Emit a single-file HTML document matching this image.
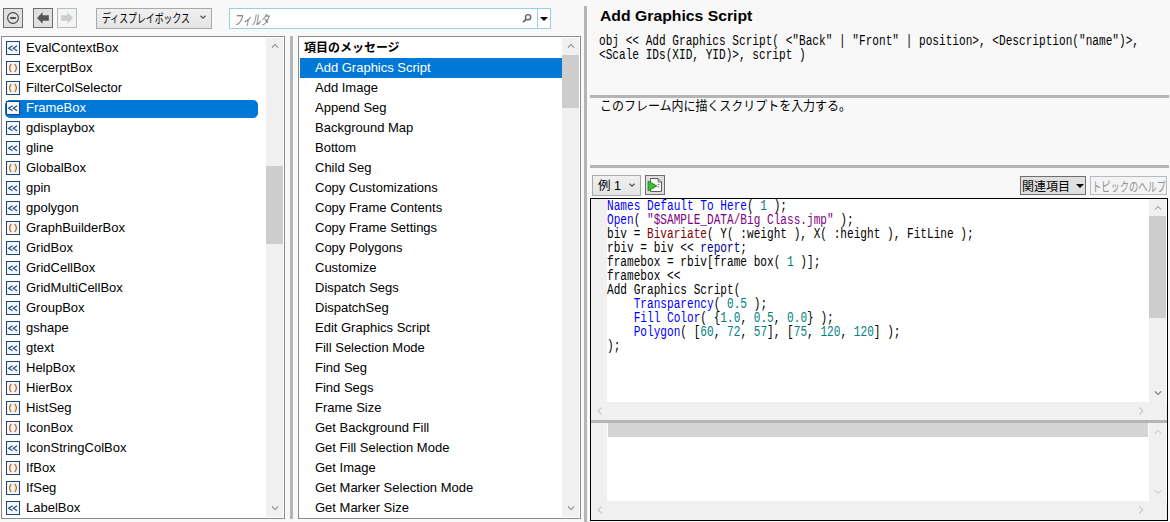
<!DOCTYPE html><html lang="ja"><head><meta charset="utf-8"><title>Scripting Index</title><style>
*{box-sizing:border-box;margin:0;padding:0}
html,body{width:1170px;height:522px;overflow:hidden}
body{background:#f8f8f8;font:13px 'Liberation Sans', 'Noto Sans CJK JP', sans-serif;color:#000;position:relative}
.abs{position:absolute}
.sx{display:inline-block;transform-origin:0 50%;white-space:pre}
.btn{position:absolute;background:#e1e1e1;border:1px solid #adadad}
.list{position:absolute;background:#fff;border:1px solid #8c8c8c;overflow:hidden}
.row{position:absolute;left:0;height:20px;line-height:20px;white-space:pre;font-size:13px}
.ico{position:absolute;left:4px;top:3px;width:14px;height:14px;border:1px solid #1c457f;background:#f3f7fc}
.sbv{position:absolute;background:#f0f0f0;width:17px}
.sbh{position:absolute;background:#f0f0f0;height:17px}
.thumb{position:absolute;background:#cdcdcd}
.split{position:absolute;background:#b5b5b5}
.code{font:11.11px 'Liberation Mono', 'IPAGothic', monospace;line-height:11.024px;white-space:pre;position:absolute;color:#000;transform:scaleY(1.27);transform-origin:0 0}
.k{color:#0000ff} .k2{color:#000090} .n{color:#008080} .s{color:#800080} .p{color:#800000}
</style></head><body>
<div class="btn" style="left:3px;top:8px;width:20px;height:20px;border-color:#6e6e6e;background:#e0e0e0"><svg width="18" height="18" viewBox="0 0 18 18" style="display:block"><circle cx="9" cy="9" r="5.4" fill="none" stroke="#444" stroke-width="1.1"/><rect x="6.2" y="8.2" width="5.6" height="1.7" fill="#333"/></svg></div>
<div class="btn" style="left:33px;top:8px;width:20px;height:20px;border-color:#6e6e6e;background:#e0e0e0"><svg width="18" height="18" viewBox="0 0 18 18" style="display:block"><path d="M3 9 L8.6 3.2 L8.6 6.3 L14.8 6.3 L14.8 11.7 L8.6 11.7 L8.6 14.8 Z" fill="#555"/></svg></div>
<div class="btn" style="left:57px;top:8px;width:20px;height:20px;border-color:#b3bcc2;background:#f4f4f4"><svg width="18" height="18" viewBox="0 0 18 18" style="display:block"><path d="M15 9 L9.4 3.2 L9.4 6.3 L3.2 6.3 L3.2 11.7 L9.4 11.7 L9.4 14.8 Z" fill="#cdcdcd"/></svg></div>
<div class="btn" style="left:96px;top:8px;width:116px;height:21px;background:linear-gradient(#f0f0f0,#e4e4e4);border-color:#a9a9a9"><div class="abs" style="left:5px;top:0;line-height:19px;height:19px"><span class="sx" style="font:12px 'Liberation Sans', 'Noto Sans CJK JP', sans-serif;transform:scaleX(0.7407);">ディスプレイボックス</span></div></div>
<svg class="abs" style="left:197px;top:11.3px" width="12" height="12" viewBox="-6 -6 12 12"><polyline points="-2.48,-1.24 0,1.24 2.48,-1.24" fill="none" stroke="#505050" stroke-width="1.2"/></svg>
<div class="abs" style="left:229px;top:8px;width:322px;height:21px;background:#fff;border:1px solid #9ccdf0"><div class="abs" style="left:4px;top:0;line-height:19px;height:19px;color:#6d6d6d"><span class="sx" style="font:italic 14px 'Liberation Sans', 'Noto Sans CJK JP', sans-serif;transform:scaleX(0.6369);">フィルタ</span></div><div class="abs" style="left:307px;top:0;width:1px;height:19px;background:#9ccdf0"></div></div>
<svg class="abs" style="left:521px;top:12px" width="12" height="12" viewBox="0 0 12 12"><circle cx="7.1" cy="5.2" r="2.6" fill="none" stroke="#636363" stroke-width="1.4"/><path d="M5.3 7.2 L2 10.2" stroke="#636363" stroke-width="1.8" fill="none"/></svg>
<svg class="abs" style="left:539px;top:15px" width="10" height="8" viewBox="0 0 10 8"><path d="M1 2 L9 2 L5 6 Z" fill="#000"/></svg>
<div class="list" style="left:1px;top:36px;width:284px;height:483px">
<div class="row" style="top:1px"><span class="ico"><svg width="12" height="12" viewBox="0 0 12 12" style="display:block"><path d="M5.5 3.7 L1.6 6.2 L5.5 8.7 M10.1 3.7 L6.2 6.2 L10.1 8.7" fill="none" stroke="#1c457f" stroke-width="1.05"/></svg></span><span style="margin-left:24px">EvalContextBox</span></div>
<div class="row" style="top:21px"><span class="ico"><svg width="12" height="12" viewBox="0 0 12 12" style="display:block"><path d="M4.3 2 Q0.9 6 4.3 10 M7.7 2 Q11.1 6 7.7 10" fill="none" stroke="#d36c12" stroke-width="1.3"/></svg></span><span style="margin-left:24px">ExcerptBox</span></div>
<div class="row" style="top:41px"><span class="ico"><svg width="12" height="12" viewBox="0 0 12 12" style="display:block"><path d="M4.3 2 Q0.9 6 4.3 10 M7.7 2 Q11.1 6 7.7 10" fill="none" stroke="#d36c12" stroke-width="1.3"/></svg></span><span style="margin-left:24px">FilterColSelector</span></div>
<div class="abs" style="left:3px;top:63px;width:253px;height:18px;background:#0078d7;border-radius:5px"></div>
<div class="row" style="top:61px;color:#fff"><span class="ico"><svg width="12" height="12" viewBox="0 0 12 12" style="display:block"><path d="M5.5 3.7 L1.6 6.2 L5.5 8.7 M10.1 3.7 L6.2 6.2 L10.1 8.7" fill="none" stroke="#1c457f" stroke-width="1.05"/></svg></span><span style="margin-left:24px">FrameBox</span></div>
<div class="row" style="top:81px"><span class="ico"><svg width="12" height="12" viewBox="0 0 12 12" style="display:block"><path d="M5.5 3.7 L1.6 6.2 L5.5 8.7 M10.1 3.7 L6.2 6.2 L10.1 8.7" fill="none" stroke="#1c457f" stroke-width="1.05"/></svg></span><span style="margin-left:24px">gdisplaybox</span></div>
<div class="row" style="top:101px"><span class="ico"><svg width="12" height="12" viewBox="0 0 12 12" style="display:block"><path d="M5.5 3.7 L1.6 6.2 L5.5 8.7 M10.1 3.7 L6.2 6.2 L10.1 8.7" fill="none" stroke="#1c457f" stroke-width="1.05"/></svg></span><span style="margin-left:24px">gline</span></div>
<div class="row" style="top:121px"><span class="ico"><svg width="12" height="12" viewBox="0 0 12 12" style="display:block"><path d="M4.3 2 Q0.9 6 4.3 10 M7.7 2 Q11.1 6 7.7 10" fill="none" stroke="#d36c12" stroke-width="1.3"/></svg></span><span style="margin-left:24px">GlobalBox</span></div>
<div class="row" style="top:141px"><span class="ico"><svg width="12" height="12" viewBox="0 0 12 12" style="display:block"><path d="M5.5 3.7 L1.6 6.2 L5.5 8.7 M10.1 3.7 L6.2 6.2 L10.1 8.7" fill="none" stroke="#1c457f" stroke-width="1.05"/></svg></span><span style="margin-left:24px">gpin</span></div>
<div class="row" style="top:161px"><span class="ico"><svg width="12" height="12" viewBox="0 0 12 12" style="display:block"><path d="M5.5 3.7 L1.6 6.2 L5.5 8.7 M10.1 3.7 L6.2 6.2 L10.1 8.7" fill="none" stroke="#1c457f" stroke-width="1.05"/></svg></span><span style="margin-left:24px">gpolygon</span></div>
<div class="row" style="top:181px"><span class="ico"><svg width="12" height="12" viewBox="0 0 12 12" style="display:block"><path d="M4.3 2 Q0.9 6 4.3 10 M7.7 2 Q11.1 6 7.7 10" fill="none" stroke="#d36c12" stroke-width="1.3"/></svg></span><span style="margin-left:24px">GraphBuilderBox</span></div>
<div class="row" style="top:201px"><span class="ico"><svg width="12" height="12" viewBox="0 0 12 12" style="display:block"><path d="M5.5 3.7 L1.6 6.2 L5.5 8.7 M10.1 3.7 L6.2 6.2 L10.1 8.7" fill="none" stroke="#1c457f" stroke-width="1.05"/></svg></span><span style="margin-left:24px">GridBox</span></div>
<div class="row" style="top:221px"><span class="ico"><svg width="12" height="12" viewBox="0 0 12 12" style="display:block"><path d="M5.5 3.7 L1.6 6.2 L5.5 8.7 M10.1 3.7 L6.2 6.2 L10.1 8.7" fill="none" stroke="#1c457f" stroke-width="1.05"/></svg></span><span style="margin-left:24px">GridCellBox</span></div>
<div class="row" style="top:241px"><span class="ico"><svg width="12" height="12" viewBox="0 0 12 12" style="display:block"><path d="M5.5 3.7 L1.6 6.2 L5.5 8.7 M10.1 3.7 L6.2 6.2 L10.1 8.7" fill="none" stroke="#1c457f" stroke-width="1.05"/></svg></span><span style="margin-left:24px">GridMultiCellBox</span></div>
<div class="row" style="top:261px"><span class="ico"><svg width="12" height="12" viewBox="0 0 12 12" style="display:block"><path d="M5.5 3.7 L1.6 6.2 L5.5 8.7 M10.1 3.7 L6.2 6.2 L10.1 8.7" fill="none" stroke="#1c457f" stroke-width="1.05"/></svg></span><span style="margin-left:24px">GroupBox</span></div>
<div class="row" style="top:281px"><span class="ico"><svg width="12" height="12" viewBox="0 0 12 12" style="display:block"><path d="M5.5 3.7 L1.6 6.2 L5.5 8.7 M10.1 3.7 L6.2 6.2 L10.1 8.7" fill="none" stroke="#1c457f" stroke-width="1.05"/></svg></span><span style="margin-left:24px">gshape</span></div>
<div class="row" style="top:301px"><span class="ico"><svg width="12" height="12" viewBox="0 0 12 12" style="display:block"><path d="M5.5 3.7 L1.6 6.2 L5.5 8.7 M10.1 3.7 L6.2 6.2 L10.1 8.7" fill="none" stroke="#1c457f" stroke-width="1.05"/></svg></span><span style="margin-left:24px">gtext</span></div>
<div class="row" style="top:321px"><span class="ico"><svg width="12" height="12" viewBox="0 0 12 12" style="display:block"><path d="M5.5 3.7 L1.6 6.2 L5.5 8.7 M10.1 3.7 L6.2 6.2 L10.1 8.7" fill="none" stroke="#1c457f" stroke-width="1.05"/></svg></span><span style="margin-left:24px">HelpBox</span></div>
<div class="row" style="top:341px"><span class="ico"><svg width="12" height="12" viewBox="0 0 12 12" style="display:block"><path d="M4.3 2 Q0.9 6 4.3 10 M7.7 2 Q11.1 6 7.7 10" fill="none" stroke="#d36c12" stroke-width="1.3"/></svg></span><span style="margin-left:24px">HierBox</span></div>
<div class="row" style="top:361px"><span class="ico"><svg width="12" height="12" viewBox="0 0 12 12" style="display:block"><path d="M4.3 2 Q0.9 6 4.3 10 M7.7 2 Q11.1 6 7.7 10" fill="none" stroke="#d36c12" stroke-width="1.3"/></svg></span><span style="margin-left:24px">HistSeg</span></div>
<div class="row" style="top:381px"><span class="ico"><svg width="12" height="12" viewBox="0 0 12 12" style="display:block"><path d="M4.3 2 Q0.9 6 4.3 10 M7.7 2 Q11.1 6 7.7 10" fill="none" stroke="#d36c12" stroke-width="1.3"/></svg></span><span style="margin-left:24px">IconBox</span></div>
<div class="row" style="top:401px"><span class="ico"><svg width="12" height="12" viewBox="0 0 12 12" style="display:block"><path d="M5.5 3.7 L1.6 6.2 L5.5 8.7 M10.1 3.7 L6.2 6.2 L10.1 8.7" fill="none" stroke="#1c457f" stroke-width="1.05"/></svg></span><span style="margin-left:24px">IconStringColBox</span></div>
<div class="row" style="top:421px"><span class="ico"><svg width="12" height="12" viewBox="0 0 12 12" style="display:block"><path d="M4.3 2 Q0.9 6 4.3 10 M7.7 2 Q11.1 6 7.7 10" fill="none" stroke="#d36c12" stroke-width="1.3"/></svg></span><span style="margin-left:24px">IfBox</span></div>
<div class="row" style="top:441px"><span class="ico"><svg width="12" height="12" viewBox="0 0 12 12" style="display:block"><path d="M4.3 2 Q0.9 6 4.3 10 M7.7 2 Q11.1 6 7.7 10" fill="none" stroke="#d36c12" stroke-width="1.3"/></svg></span><span style="margin-left:24px">IfSeg</span></div>
<div class="row" style="top:461px"><span class="ico"><svg width="12" height="12" viewBox="0 0 12 12" style="display:block"><path d="M5.5 3.7 L1.6 6.2 L5.5 8.7 M10.1 3.7 L6.2 6.2 L10.1 8.7" fill="none" stroke="#1c457f" stroke-width="1.05"/></svg></span><span style="margin-left:24px">LabelBox</span></div>
<div class="sbv" style="left:264px;top:1px;height:479px"><div class="thumb" style="left:0;top:128px;width:17px;height:78px"></div></div>
</div>
<svg class="abs" style="left:269.4px;top:40.3px" width="12" height="12" viewBox="-6 -6 12 12"><polyline points="-3.1,1.55 0,-1.55 3.1,1.55" fill="none" stroke="#8c8c8c" stroke-width="1.15"/></svg>
<svg class="abs" style="left:269.4px;top:502.3px" width="12" height="12" viewBox="-6 -6 12 12"><polyline points="-3.1,-1.55 0,1.55 3.1,-1.55" fill="none" stroke="#8c8c8c" stroke-width="1.15"/></svg>
<div class="split" style="left:290px;top:36px;width:3px;height:483px"></div>
<div class="list" style="left:298px;top:36px;width:283px;height:483px">
<div class="row" style="top:1px;left:5px"><span class="sx" style="font:bold 12px 'Liberation Sans', 'Noto Sans CJK JP', sans-serif;transform:scaleX(0.9983);">項目のメッセージ</span></div>
<div class="abs" style="left:1px;top:21px;width:262px;height:20px;background:#0078d7"></div>
<div class="row" style="top:21px;left:16px;color:#fff">Add Graphics Script</div>
<div class="row" style="top:41px;left:16px">Add Image</div>
<div class="row" style="top:61px;left:16px">Append Seg</div>
<div class="row" style="top:81px;left:16px">Background Map</div>
<div class="row" style="top:101px;left:16px">Bottom</div>
<div class="row" style="top:121px;left:16px">Child Seg</div>
<div class="row" style="top:141px;left:16px">Copy Customizations</div>
<div class="row" style="top:161px;left:16px">Copy Frame Contents</div>
<div class="row" style="top:181px;left:16px">Copy Frame Settings</div>
<div class="row" style="top:201px;left:16px">Copy Polygons</div>
<div class="row" style="top:221px;left:16px">Customize</div>
<div class="row" style="top:241px;left:16px">Dispatch Segs</div>
<div class="row" style="top:261px;left:16px">DispatchSeg</div>
<div class="row" style="top:281px;left:16px">Edit Graphics Script</div>
<div class="row" style="top:301px;left:16px">Fill Selection Mode</div>
<div class="row" style="top:321px;left:16px">Find Seg</div>
<div class="row" style="top:341px;left:16px">Find Segs</div>
<div class="row" style="top:361px;left:16px">Frame Size</div>
<div class="row" style="top:381px;left:16px">Get Background Fill</div>
<div class="row" style="top:401px;left:16px">Get Fill Selection Mode</div>
<div class="row" style="top:421px;left:16px">Get Image</div>
<div class="row" style="top:441px;left:16px">Get Marker Selection Mode</div>
<div class="row" style="top:461px;left:16px">Get Marker Size</div>
<div class="sbv" style="left:263px;top:1px;height:479px"><div class="thumb" style="left:0;top:17px;width:17px;height:53px"></div></div>
</div>
<svg class="abs" style="left:565.4px;top:40.3px" width="12" height="12" viewBox="-6 -6 12 12"><polyline points="-3.1,1.55 0,-1.55 3.1,1.55" fill="none" stroke="#8c8c8c" stroke-width="1.15"/></svg>
<svg class="abs" style="left:565.4px;top:502.3px" width="12" height="12" viewBox="-6 -6 12 12"><polyline points="-3.1,-1.55 0,1.55 3.1,-1.55" fill="none" stroke="#8c8c8c" stroke-width="1.15"/></svg>
<div class="split" style="left:584px;top:6px;width:3px;height:516px"></div>
<div class="abs" style="left:600px;top:7px;height:20px;line-height:20px"><span class="sx" style="font:bold 15.5px 'Liberation Sans', 'Noto Sans CJK JP', sans-serif;transform:scaleX(1.0162);">Add Graphics Script</span></div>
<div class="code" style="left:599px;top:35px">obj &lt;&lt; Add Graphics Script( &lt;"Back" | "Front" | position&gt;, &lt;Description("name")&gt;,
&lt;Scale IDs(XID, YID)&gt;, script )</div>
<div class="split" style="left:590px;top:95px;width:579px;height:3px"></div>
<div class="abs" style="left:599.5px;top:95px;height:18px;line-height:18px"><span class="sx" style="font:13px 'Liberation Sans', 'Noto Sans CJK JP', sans-serif;transform:scaleX(0.9207);">このフレーム内に描くスクリプトを入力する。</span></div>
<div class="split" style="left:590px;top:165px;width:579px;height:3px"></div>
<div class="btn" style="left:592px;top:175px;width:49px;height:21px;background:linear-gradient(#f0f0f0,#e4e4e4);border-color:#a9a9a9"><div class="abs" style="left:5px;top:0;line-height:19px;height:19px"><span class="sx" style="font:12px 'Liberation Sans', 'Noto Sans CJK JP', sans-serif;transform:scaleX(1.0447);">例 1</span></div></div>
<svg class="abs" style="left:626px;top:178.5px" width="12" height="12" viewBox="-6 -6 12 12"><polyline points="-2.48,-1.24 0,1.24 2.48,-1.24" fill="none" stroke="#505050" stroke-width="1.2"/></svg>
<div class="btn" style="left:645px;top:175px;width:20px;height:20px;border-color:#6e6e6e;background:#dedede"><svg width="18" height="18" viewBox="0 0 18 18" style="display:block"><path d="M4.5 2.5 L12 2.5 L15.5 6 L15.5 15.5 L4.5 15.5 Z" fill="#fafafa" stroke="#5c5c5c" stroke-width="1"/><path d="M12 2.5 L12 6 L15.5 6" fill="none" stroke="#5c5c5c" stroke-width="0.9"/><path d="M11.6 8.4 h1.6 M11.6 10.9 h1.6" stroke="#555" stroke-width="0.9"/><path d="M2.1 5.2 L10.8 10 L2.1 14.8 Z" fill="#3fbd35" stroke="#1f8316" stroke-width="1"/></svg></div>
<div class="btn" style="left:1020px;top:176px;width:66px;height:19px;border-color:#6e6e6e;background:#e0e0e0"><div class="abs" style="left:1px;top:0;line-height:17px;height:17px"><span class="sx" style="font:12px 'Liberation Sans', 'Noto Sans CJK JP', sans-serif;transform:scaleX(0.9997);">関連項目</span></div></div>
<svg class="abs" style="left:1075px;top:182px" width="10" height="8" viewBox="0 0 10 8"><path d="M1 2 L9 2 L5 6 Z" fill="#000"/></svg>
<div class="btn" style="left:1090px;top:176px;width:77px;height:19px;border-color:#b3bcc2;background:#f4f4f4"><div class="abs" style="left:1px;top:-1px;line-height:17px;height:17px;color:#909090"><span class="sx" style="font:13px 'Liberation Sans', 'Noto Sans CJK JP', sans-serif;transform:scaleX(0.7114);">トピックのヘルプ</span></div></div>
<div class="abs" style="left:590px;top:198px;width:578px;height:323px;border:1px solid #000;background:#fff">
<div class="abs" style="left:0;top:0;width:16px;height:204px;background:#f0f0f0"></div>
<div class="code" style="left:16px;top:1px"><span class="k">Names Default To Here</span>( <span class="n">1</span> );
<span class="k">Open</span>( <span class="s">"$SAMPLE_DATA/Big Class.jmp"</span> );
biv = <span class="p">Bivariate</span>( Y( :weight ), X( :height ), FitLine );
rbiv = biv &lt;&lt; <span class="k2">report</span>;
framebox = rbiv[frame box( <span class="n">1</span> )];
framebox &lt;&lt;
Add Graphics Script(
    <span class="k">Transparency</span>( <span class="n">0.5</span> );
    <span class="k">Fill Color</span>( {<span class="n">1.0</span>, <span class="n">0.5</span>, <span class="n">0.0</span>} );
    <span class="k">Polygon</span>( [<span class="n">60</span>, <span class="n">72</span>, <span class="n">57</span>], [<span class="n">75</span>, <span class="n">120</span>, <span class="n">120</span>] );
);</div>
<div class="sbv" style="left:558px;top:0;height:204px"><div class="thumb" style="left:0;top:17px;width:17px;height:102px"></div></div>
<div class="sbh" style="left:0;top:203px;width:576px;height:18px"></div>
<div class="split" style="left:0;top:221px;width:576px;height:3px"></div>
<div class="abs" style="left:0;top:224px;width:16px;height:79px;background:#f0f0f0"></div>
<div class="abs" style="left:17px;top:224px;width:540px;height:14px;background:#d4d4d4"></div>
<div class="sbv" style="left:558px;top:224px;height:79px"></div>
<div class="sbh" style="left:0;top:302px;width:576px;height:19px"></div>
</div>
<svg class="abs" style="left:1152.2px;top:201.5px" width="12" height="12" viewBox="-6 -6 12 12"><polyline points="-3.1,1.55 0,-1.55 3.1,1.55" fill="none" stroke="#a6a6a6" stroke-width="1.15"/></svg>
<svg class="abs" style="left:1152.2px;top:387.4px" width="12" height="12" viewBox="-6 -6 12 12"><polyline points="-3.1,-1.55 0,1.55 3.1,-1.55" fill="none" stroke="#707070" stroke-width="1.15"/></svg>
<svg class="abs" style="left:593.5px;top:404.5px" width="12" height="12" viewBox="-6 -6 12 12"><polyline points="1.78,-3.56 -1.78,0 1.78,3.56" fill="none" stroke="#c8c8c8" stroke-width="1.2"/></svg>
<svg class="abs" style="left:1134.7px;top:404.5px" width="12" height="12" viewBox="-6 -6 12 12"><polyline points="-1.78,-3.56 1.78,0 -1.78,3.56" fill="none" stroke="#c8c8c8" stroke-width="1.2"/></svg>
<svg class="abs" style="left:1152.2px;top:425.5px" width="12" height="12" viewBox="-6 -6 12 12"><polyline points="-3.1,1.55 0,-1.55 3.1,1.55" fill="none" stroke="#cfcfcf" stroke-width="1.15"/></svg>
<svg class="abs" style="left:1152.2px;top:486px" width="12" height="12" viewBox="-6 -6 12 12"><polyline points="-3.1,-1.55 0,1.55 3.1,-1.55" fill="none" stroke="#cfcfcf" stroke-width="1.15"/></svg>
<svg class="abs" style="left:593.5px;top:503.5px" width="12" height="12" viewBox="-6 -6 12 12"><polyline points="1.78,-3.56 -1.78,0 1.78,3.56" fill="none" stroke="#c8c8c8" stroke-width="1.2"/></svg>
<svg class="abs" style="left:1134.7px;top:503.5px" width="12" height="12" viewBox="-6 -6 12 12"><polyline points="-1.78,-3.56 1.78,0 -1.78,3.56" fill="none" stroke="#c8c8c8" stroke-width="1.2"/></svg>
</body></html>
